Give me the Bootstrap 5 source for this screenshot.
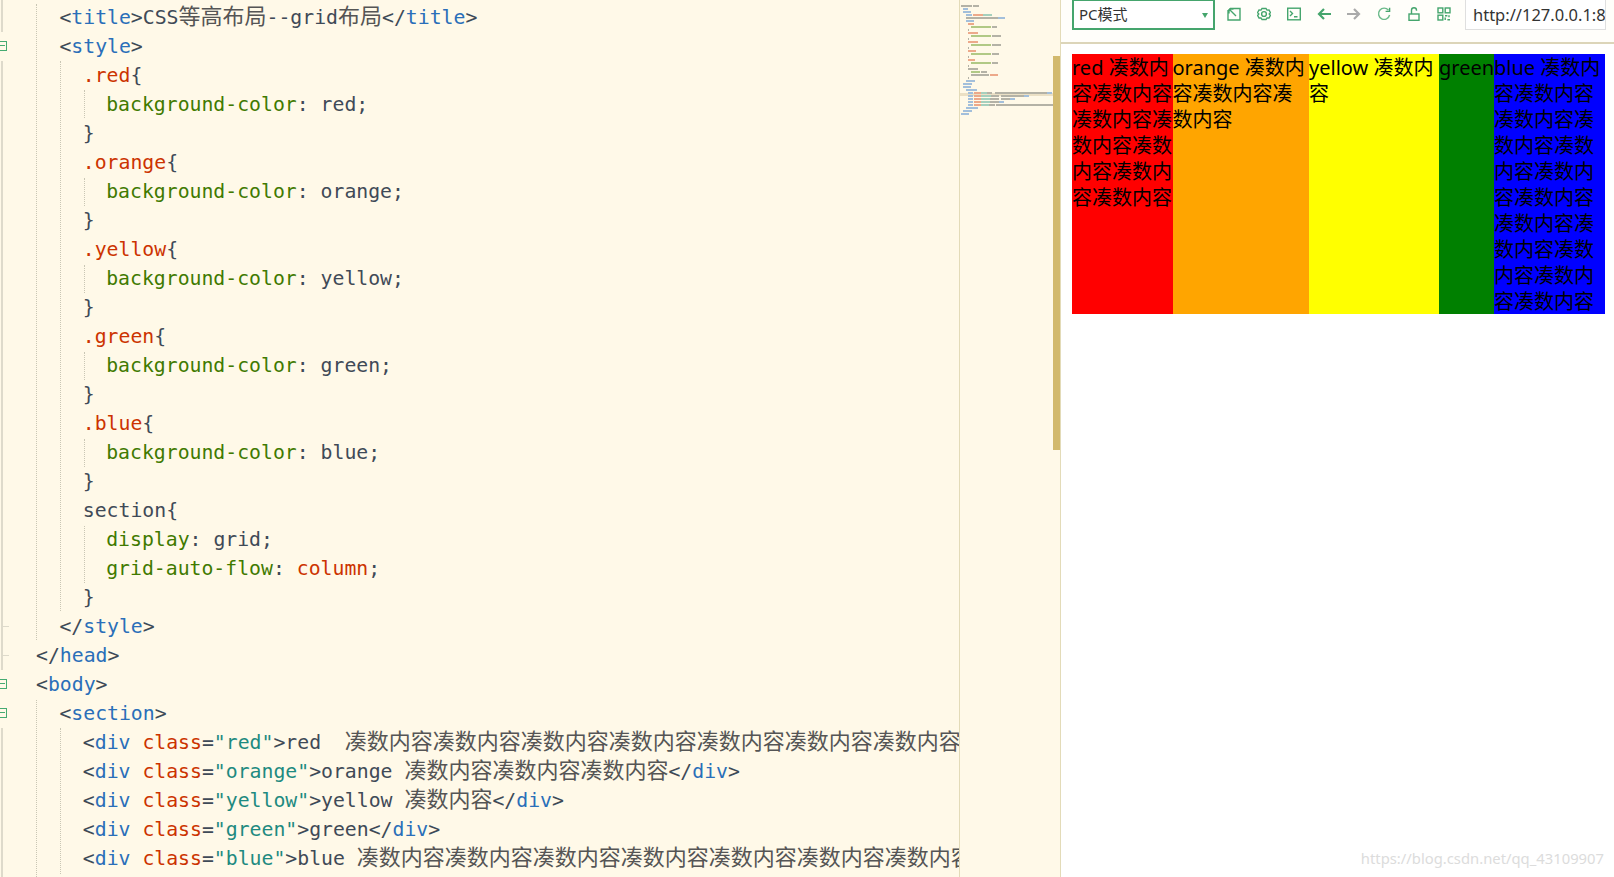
<!DOCTYPE html>
<html lang="zh">
<head>
<meta charset="utf-8">
<title>CSS等高布局--grid布局</title>
<link href="https://cdn.jsdelivr.net/npm/bootstrap@5.3.0/dist/css/bootstrap.min.css" rel="stylesheet">
<style>
html,body{height:877px;overflow:hidden;background:#fff}
.shell{height:877px;width:1614px}
.editor{width:959px;flex:none;background:#fff9e8;padding-left:36px;font:19.8px/29px "DejaVu Sans Mono","Noto Sans CJK SC",monospace;color:#3f4a57;overflow:hidden}
.ln{height:29px;white-space:pre;padding-top:3px;box-sizing:border-box}
.i1{padding-left:23.4px}.i2{padding-left:46.8px}.i3{padding-left:70.2px}
.han{font-family:"Noto Sans CJK SC",sans-serif;font-size:22px;color:#555;line-height:0}
.b{color:#3d4a57}.n{color:#2a6fb9}.s{color:#cc3300}.p{color:#3f7a00}.v{color:#3f4a57}.q{color:#1e8a80}
.guide{position:absolute;width:0;border-left:1px dotted #c9c6b4}
.gutline{position:absolute;left:1px;width:0;border-left:2px solid #dedacb}
.tick{position:absolute;left:1px;width:8px;height:1px;background:#dedacb}
.foldbox{position:absolute;left:-3px;width:10px;height:10px;border:1px solid #46ab72;color:#46ab72}
.foldbox::after{content:"";position:absolute;left:1px;right:1px;top:3px;height:1px;background:#46ab72}
.mini{width:102px;flex:none;background:#fff9e8;border-left:1px solid #e3dbb8;border-right:1px solid #e3dbb8}
.mini svg{display:block}
.pane{flex:1 1 auto;min-width:0;background:#fff}
.toolbar{height:44px;background:#fffefa;border-bottom:2px solid #dcd5b9;padding-left:11px}
.modebox{width:143px;flex:none;height:30px;border:2px solid #45a56d;border-top-width:1px;font:15px/29px "Noto Sans","Noto Sans CJK SC",sans-serif;color:#333;padding-left:5px;background:#fff}
.caret-mark{width:0;height:0;border:3.5px solid transparent;border-top:5px solid #45a56d;margin:4px 5px 0 0}
.tools{gap:16px;margin-left:12px;margin-top:-14px;padding-top:0}
.tools svg{display:block;width:14px;height:14px;fill:none;stroke:#45a56d;stroke-width:1.4}
.addr{width:141px;height:30px;margin-left:14px;border:1px solid #dfdfdf;border-top:0;background:#fff;font:16.5px/30px "Noto Sans",sans-serif;color:#333;padding-left:7px;overflow:hidden;white-space:nowrap}
.stage{margin:10px 0 0 11px;width:533px;height:260px;display:grid;grid-template-columns:100.5px 136.5px 130px 55px 111px;grid-template-rows:260px;font:20px/26px "Noto Sans","Noto Sans CJK SC",sans-serif;color:#000}
.c-red{background:red}.c-orange{background:orange}.c-yellow{background:#ff0}.c-green{background:green}.c-blue{background:#00f}
.stage>div{white-space:nowrap;padding-top:1px;min-height:0}
.stamp{position:absolute;right:10px;bottom:9px;font:14.8px/20px "Noto Sans",sans-serif;color:#dcdcdc}
</style>
</head>
<body>
<div class="shell d-flex position-relative overflow-hidden">
  <div class="editor position-relative">
<div class="ln i1"><span class="b">&lt;</span><span class="n">title</span><span class="b">&gt;</span>CSS<span class="han">等高布局</span>--grid<span class="han">布局</span><span class="b">&lt;/</span><span class="n">title</span><span class="b">&gt;</span></div>
<div class="ln i1"><span class="b">&lt;</span><span class="n">style</span><span class="b">&gt;</span></div>
<div class="ln i2"><span class="s">.red</span>{</div>
<div class="ln i3"><span class="p">background-color</span>: red;</div>
<div class="ln i2">}</div>
<div class="ln i2"><span class="s">.orange</span>{</div>
<div class="ln i3"><span class="p">background-color</span>: orange;</div>
<div class="ln i2">}</div>
<div class="ln i2"><span class="s">.yellow</span>{</div>
<div class="ln i3"><span class="p">background-color</span>: yellow;</div>
<div class="ln i2">}</div>
<div class="ln i2"><span class="s">.green</span>{</div>
<div class="ln i3"><span class="p">background-color</span>: green;</div>
<div class="ln i2">}</div>
<div class="ln i2"><span class="s">.blue</span>{</div>
<div class="ln i3"><span class="p">background-color</span>: blue;</div>
<div class="ln i2">}</div>
<div class="ln i2">section{</div>
<div class="ln i3"><span class="p">display</span>: grid;</div>
<div class="ln i3"><span class="p">grid-auto-flow</span>: <span class="s">column</span>;</div>
<div class="ln i2">}</div>
<div class="ln i1"><span class="b">&lt;/</span><span class="n">style</span><span class="b">&gt;</span></div>
<div class="ln"><span class="b">&lt;/</span><span class="n">head</span><span class="b">&gt;</span></div>
<div class="ln"><span class="b">&lt;</span><span class="n">body</span><span class="b">&gt;</span></div>
<div class="ln i1"><span class="b">&lt;</span><span class="n">section</span><span class="b">&gt;</span></div>
<div class="ln i2"><span class="b">&lt;</span><span class="n">div</span> <span class="s">class</span>=<span class="q">"red"</span><span class="b">&gt;</span>red  <span class="han">凑数内容凑数内容凑数内容凑数内容凑数内容凑数内容凑数内容凑数内容</span></div>
<div class="ln i2"><span class="b">&lt;</span><span class="n">div</span> <span class="s">class</span>=<span class="q">"orange"</span><span class="b">&gt;</span>orange <span class="han">凑数内容凑数内容凑数内容</span><span class="b">&lt;/</span><span class="n">div</span><span class="b">&gt;</span></div>
<div class="ln i2"><span class="b">&lt;</span><span class="n">div</span> <span class="s">class</span>=<span class="q">"yellow"</span><span class="b">&gt;</span>yellow <span class="han">凑数内容</span><span class="b">&lt;/</span><span class="n">div</span><span class="b">&gt;</span></div>
<div class="ln i2"><span class="b">&lt;</span><span class="n">div</span> <span class="s">class</span>=<span class="q">"green"</span><span class="b">&gt;</span>green<span class="b">&lt;/</span><span class="n">div</span><span class="b">&gt;</span></div>
<div class="ln i2"><span class="b">&lt;</span><span class="n">div</span> <span class="s">class</span>=<span class="q">"blue"</span><span class="b">&gt;</span>blue <span class="han">凑数内容凑数内容凑数内容凑数内容凑数内容凑数内容凑数内容凑数内容</span></div>
<span class="gutline" style="top:0;height:32px"></span><span class="gutline" style="top:61px;height:609px"></span><span class="gutline" style="top:728px;height:149px"></span>
<span class="tick" style="top:626px"></span><span class="tick" style="top:655px"></span>
<span class="foldbox" style="top:41px"></span><span class="foldbox" style="top:679px"></span><span class="foldbox" style="top:708px"></span>
<span class="guide" style="left:36px;top:4px;height:636px"></span><span class="guide" style="left:36px;top:700px;height:177px"></span>
<span class="guide" style="left:60px;top:61px;height:550px"></span><span class="guide" style="left:60px;top:728px;height:146px"></span>
<span class="guide" style="left:84px;top:90px;height:28px"></span><span class="guide" style="left:84px;top:178px;height:28px"></span><span class="guide" style="left:84px;top:265px;height:28px"></span><span class="guide" style="left:84px;top:352px;height:28px"></span><span class="guide" style="left:84px;top:439px;height:28px"></span><span class="guide" style="left:84px;top:526px;height:57px"></span>
  </div>
  <div class="mini">
    <svg width="100" height="877" viewBox="30 0 300 2631" aria-hidden="true">
      <rect x="28" y="279" width="281" height="9" fill="#ebe0c5"/>
      <g fill="#b4b2a6">
        <rect x="33" y="15" width="33" height="6"/><rect x="69" y="15" width="18" height="6"/>
        <rect x="126" y="78" width="15" height="6"/><rect x="54" y="87" width="3" height="6"/><rect x="126" y="105" width="27" height="6"/><rect x="54" y="114" width="3" height="6"/><rect x="126" y="132" width="27" height="6"/><rect x="54" y="141" width="3" height="6"/><rect x="126" y="159" width="21" height="6"/><rect x="54" y="168" width="3" height="6"/><rect x="126" y="186" width="18" height="6"/><rect x="54" y="195" width="3" height="6"/><rect x="54" y="204" width="30" height="6"/><rect x="93" y="213" width="18" height="6"/><rect x="63" y="222" width="54" height="6"/><rect x="54" y="231" width="3" height="6"/>
        <rect x="48" y="51" width="96" height="6"/>
        <rect x="111" y="276" width="15" height="6"/><rect x="135" y="276" width="156" height="6"/><rect x="123" y="285" width="24" height="6"/><rect x="153" y="285" width="69" height="6"/><rect x="120" y="294" width="27" height="6"/><rect x="153" y="294" width="27" height="6"/><rect x="120" y="303" width="27" height="6"/><rect x="117" y="312" width="18" height="6"/><rect x="138" y="312" width="171" height="6"/>
      </g>
      <g fill="#a3bfdb">
        <rect x="39" y="24" width="15" height="6"/><rect x="39" y="33" width="24" height="6"/><rect x="48" y="42" width="18" height="6"/><rect x="144" y="51" width="21" height="6"/><rect x="48" y="60" width="24" height="6"/><rect x="48" y="240" width="27" height="6"/><rect x="39" y="249" width="27" height="6"/><rect x="39" y="258" width="24" height="6"/><rect x="48" y="267" width="33" height="6"/>
        <rect x="54" y="276" width="15" height="6"/><rect x="291" y="276" width="15" height="6"/><rect x="54" y="285" width="15" height="6"/><rect x="222" y="285" width="15" height="6"/><rect x="54" y="294" width="15" height="6"/><rect x="180" y="294" width="15" height="6"/><rect x="54" y="303" width="15" height="6"/><rect x="147" y="303" width="15" height="6"/><rect x="54" y="312" width="15" height="6"/><rect x="48" y="321" width="36" height="6"/><rect x="39" y="330" width="27" height="6"/><rect x="33" y="339" width="24" height="6"/>
      </g>
      <g fill="#eda98a">
        <rect x="69" y="42" width="30" height="6"/><rect x="54" y="69" width="18" height="6"/><rect x="54" y="96" width="30" height="6"/><rect x="54" y="123" width="30" height="6"/><rect x="54" y="150" width="24" height="6"/><rect x="54" y="177" width="21" height="6"/><rect x="120" y="222" width="24" height="6"/>
        <rect x="72" y="276" width="21" height="6"/><rect x="72" y="285" width="21" height="6"/><rect x="72" y="294" width="21" height="6"/><rect x="72" y="303" width="21" height="6"/><rect x="72" y="312" width="21" height="6"/>
      </g>
      <g fill="#a5d0bd">
        <rect x="99" y="42" width="27" height="6"/><rect x="93" y="276" width="18" height="6"/><rect x="93" y="285" width="30" height="6"/><rect x="93" y="294" width="27" height="6"/><rect x="93" y="303" width="27" height="6"/><rect x="93" y="312" width="24" height="6"/>
      </g>
      <g fill="#b1c985">
        <rect x="63" y="78" width="60" height="6"/><rect x="63" y="105" width="60" height="6"/><rect x="63" y="132" width="60" height="6"/><rect x="63" y="159" width="60" height="6"/><rect x="63" y="186" width="60" height="6"/><rect x="63" y="213" width="27" height="6"/>
      </g>
      <rect x="309" y="168" width="24" height="1182" fill="#d2b96d"/>
    </svg>
  </div>
  <div class="pane">
    <div class="toolbar d-flex align-items-start">
      <div class="modebox d-flex justify-content-between align-items-center"><span>PC模式</span><span class="caret-mark"></span></div>
      <div class="tools d-flex align-items-center align-self-center">
        <svg viewBox="0 0 14 14"><path d="M3 1.5H13V13H1V3M2 2l7 7M2 2v4.5M2 2h4.5"/></svg>
        <svg viewBox="0 0 14 14"><path d="M5 1.5h4l1 1.6 2-.1 1.4 2.6L12.2 7l1.2 1.4L12 11l-2-.1-1 1.6H5l-1-1.6-2 .1L.6 8.4 1.8 7 .6 5.6 2 3l2 .1z"/><circle cx="7" cy="7" r="2.4"/></svg>
        <svg viewBox="0 0 14 14"><rect x=".7" y="1.2" width="12.6" height="11.6"/><path d="M3 4l2.5 2.5L3 9M7 9.8h3.5"/></svg>
        <svg viewBox="0 0 14 14" style="stroke-width:2.2"><path d="M14 7H2M7 2 2 7l5 5"/></svg>
        <svg viewBox="0 0 14 14" style="stroke:#aaa;stroke-width:2.2"><path d="M0 7h12M7 2l5 5-5 5"/></svg>
        <svg viewBox="0 0 14 14" style="stroke:#6dbb8c"><path d="M11.5 3.2A5.6 5.6 0 1 0 12.6 8"/><path d="M8.6 4.4h4V.8" style="stroke:#45a56d"/></svg>
        <svg viewBox="0 0 14 14"><rect x="2" y="7" width="10" height="6.3"/><path d="M4.5 7V3.2a2.5 2.5 0 0 1 5 0v.6"/></svg>
        <svg viewBox="0 0 14 14"><rect x="1" y="1" width="4.8" height="4.8"/><rect x="8.2" y="1" width="4.8" height="4.8"/><rect x="1" y="8.2" width="4.8" height="4.8"/><path d="M8 8.8h2.4M12 8.2v2M8.2 10.5v2.6M10.4 12.8H13"/></svg>
      </div>
      <div class="addr">http://127.0.0.1:8080/</div>
    </div>
    <section class="stage">
      <div class="c-red">red 凑数内<br>容凑数内容<br>凑数内容凑<br>数内容凑数<br>内容凑数内<br>容凑数内容</div>
      <div class="c-orange">orange 凑数内<br>容凑数内容凑<br>数内容</div>
      <div class="c-yellow">yellow 凑数内<br>容</div>
      <div class="c-green">green</div>
      <div class="c-blue">blue 凑数内<br>容凑数内容<br>凑数内容凑<br>数内容凑数<br>内容凑数内<br>容凑数内容<br>凑数内容凑<br>数内容凑数<br>内容凑数内<br>容凑数内容</div>
    </section>
  </div>
  <div class="stamp">https://blog.csdn.net/qq_43109907</div>
</div>
<script src="https://cdn.jsdelivr.net/npm/bootstrap@5.3.0/dist/js/bootstrap.bundle.min.js"></script>
</body>
</html>
